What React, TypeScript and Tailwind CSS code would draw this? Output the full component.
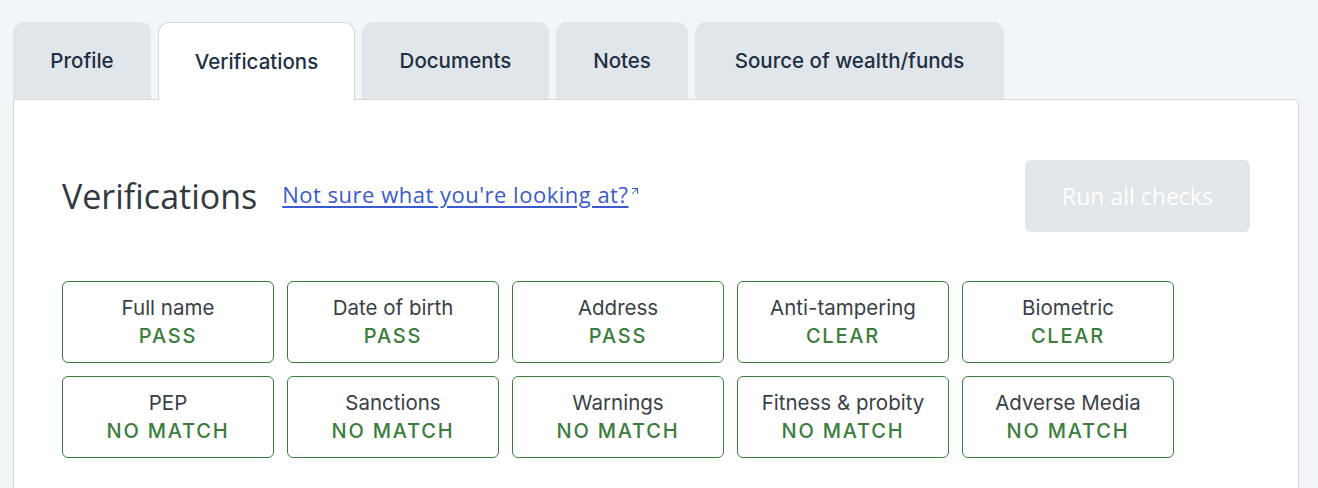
import { ArrowUpRight } from "lucide-react";

const tabs = ["Profile", "Verifications", "Documents", "Notes", "Source of wealth/funds"];
const tabWidths = ["w-[138px]", "w-[197px]", "w-[187px]", "w-[132px]", "w-[309px]"];

const checks = [
  { label: "Full name", status: "PASS" },
  { label: "Date of birth", status: "PASS" },
  { label: "Address", status: "PASS" },
  { label: "Anti-tampering", status: "CLEAR" },
  { label: "Biometric", status: "CLEAR" },
  { label: "PEP", status: "NO MATCH" },
  { label: "Sanctions", status: "NO MATCH" },
  { label: "Warnings", status: "NO MATCH" },
  { label: "Fitness & probity", status: "NO MATCH" },
  { label: "Adverse Media", status: "NO MATCH" },
];

export default function App() {
  const active = "Verifications";

  return (
    <div
      className="min-h-screen bg-[#f3f6f9] pl-[13px] pr-[19px] pt-[22px]"
      style={{ fontFamily: "Inter, 'Noto Sans', sans-serif" }}
    >
      {/* Tabs */}
      <div className="flex items-end gap-[7px]">
        {tabs.map((tab, i) => {
          const isActive = tab === active;
          return (
            <div
              key={tab}
              className={`${tabWidths[i]} h-[77px] flex items-center justify-center pt-[2px] rounded-t-[11px] text-[20.5px] font-medium text-[#1f2f44] ${
                isActive
                  ? "relative z-10 -mb-px h-[78px] bg-white border border-b-0 border-[#d4d9de]"
                  : "bg-[#e1e6ea]"
              }`}
            >
              {tab}
            </div>
          );
        })}
      </div>

      {/* Panel */}
      <div className="bg-white border border-[#d4d9de] rounded-tr-[5px] h-[400px] pl-[48px] pr-[48px] pt-[60px]">
        <div className="flex items-center justify-between">
          <div className="flex items-center gap-[25px]" style={{ fontFamily: "'Open Sans', 'Noto Sans', sans-serif" }}>
            <h1 className="text-[34px] text-[#33383f] leading-none">Verifications</h1>
            <a href="#" className="flex items-start text-[22px] tracking-[0.5px] text-[#3a5bcc] underline underline-offset-[3px] leading-none mb-[4px]">
              Not sure what you're looking at?
              <ArrowUpRight size={12} strokeWidth={2} className="ml-[1px] mt-[2px]" />
            </a>
          </div>
          <button className="w-[225px] h-[72px] rounded-[6px] bg-[#e1e6ea] text-white text-[23px]" style={{ fontFamily: "'Open Sans', 'Noto Sans', sans-serif" }}>
            Run all checks
          </button>
        </div>

        <div className="mt-[49px] grid grid-cols-[repeat(5,212px)] gap-x-[13px] gap-y-[13px]">
          {checks.map((c) => (
            <div
              key={c.label}
              className="h-[82px] rounded-[6px] border border-[#3c7d3e] flex flex-col items-center justify-center"
            >
              <div className="text-[20.5px] text-[#3a3f47] leading-[28px]">{c.label}</div>
              <div className="text-[20px] font-medium tracking-[1.8px] text-[#3b7d3c] leading-[28px]">{c.status}</div>
            </div>
          ))}
        </div>
      </div>
    </div>
  );
}
